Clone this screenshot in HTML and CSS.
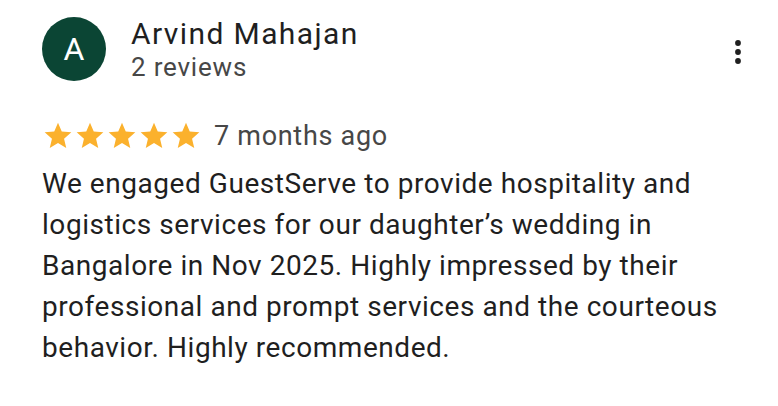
FILE: index.html
```html
<!DOCTYPE html>
<html>
<head>
<meta charset="utf-8">
<link rel="stylesheet" href="styles.css">
</head>
<body>
<div class="review">
  <div class="header">
    <div class="avatar">A</div>
    <div class="who">
      <div class="name">Arvind Mahajan</div>
      <div class="count">2 reviews</div>
    </div>
    <div class="menu">
      <svg width="12" height="30" viewBox="0 0 12 30"><circle cx="6" cy="6" r="2.9" fill="#1f1f1f"/><circle cx="6" cy="15" r="2.9" fill="#1f1f1f"/><circle cx="6" cy="24" r="2.9" fill="#1f1f1f"/></svg>
    </div>
  </div>
  <div class="meta">
    <div class="stars">
      <svg viewBox="0 0 24 24"><path d="M12 17.27L18.18 21l-1.64-7.03L22 9.24l-7.19-.61L12 2 9.19 8.63 2 9.24l5.46 4.73L5.82 21z" fill="#fbb12d"/></svg>
      <svg viewBox="0 0 24 24"><path d="M12 17.27L18.18 21l-1.64-7.03L22 9.24l-7.19-.61L12 2 9.19 8.63 2 9.24l5.46 4.73L5.82 21z" fill="#fbb12d"/></svg>
      <svg viewBox="0 0 24 24"><path d="M12 17.27L18.18 21l-1.64-7.03L22 9.24l-7.19-.61L12 2 9.19 8.63 2 9.24l5.46 4.73L5.82 21z" fill="#fbb12d"/></svg>
      <svg viewBox="0 0 24 24"><path d="M12 17.27L18.18 21l-1.64-7.03L22 9.24l-7.19-.61L12 2 9.19 8.63 2 9.24l5.46 4.73L5.82 21z" fill="#fbb12d"/></svg>
      <svg viewBox="0 0 24 24"><path d="M12 17.27L18.18 21l-1.64-7.03L22 9.24l-7.19-.61L12 2 9.19 8.63 2 9.24l5.46 4.73L5.82 21z" fill="#fbb12d"/></svg>
    </div>
    <span class="ago">7 months ago</span>
  </div>
  <p class="text">We engaged GuestServe to provide hospitality and logistics services for our daughter’s wedding in Bangalore in Nov 2025. Highly impressed by their professional and prompt services and the courteous behavior. Highly recommended.</p>
</div>
</body>
</html>
```

FILE: styles.css
```css
html, body { margin: 0; padding: 0; background: #fff; }
body { font-family: Roboto, "Liberation Sans", sans-serif; color: #1f1f1f; }
.review { padding: 17px 40px 0 42px; }
.header { display: flex; align-items: flex-start; }
.avatar {
  width: 64px; height: 64px; border-radius: 50%;
  background: #0b4534; color: #fff;
  display: flex; align-items: center; justify-content: center;
  font-size: 32px; flex: none;
}
.who { margin-left: 25px; flex: 1; }
.name { font-size: 30px; line-height: 33px; letter-spacing: 1.4px; color: #1f1f1f; margin-top: 0; }
.count { font-size: 26px; line-height: 34px; letter-spacing: 0.8px; color: #474747; }
.menu { margin-top: 20px; margin-right: -6px; width: 12px; height: 30px; }
.menu svg { display: block; }
.meta { display: flex; align-items: center; margin-top: 36px; }
.stars { display: flex; }
.stars svg { width: 32px; height: 32px; display: block; }
.ago { margin-left: 12px; font-size: 27px; letter-spacing: 0.7px; color: #474747; }
.text { margin: 11px 0 0; font-size: 28px; line-height: 41px; letter-spacing: 0.55px; color: #1f1f1f; }
```
